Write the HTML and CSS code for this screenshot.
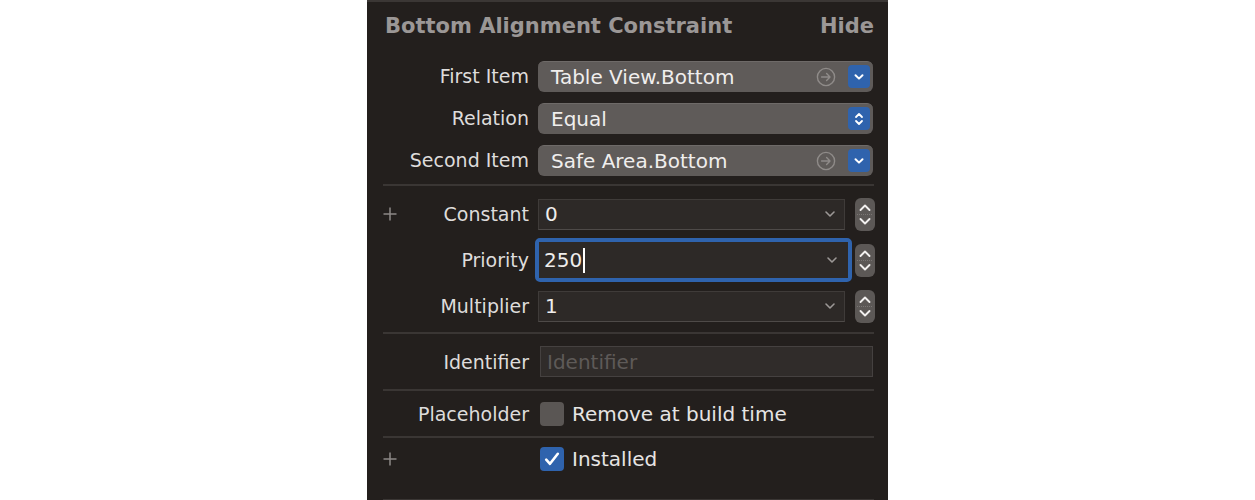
FILE: index.html
```html
<!DOCTYPE html>
<html>
<head>
<meta charset="utf-8">
<link rel="stylesheet" href="styles.css">
</head>
<body>
<div class="panel">
  <div class="header">
    <span class="title">Bottom Alignment Constraint</span>
    <span class="hide">Hide</span>
  </div>

  <div class="row r42">
    <span class="label">First Item</span>
    <div class="popup">
      <span class="ptext">Table View.Bottom</span>
      <svg class="goto" width="20" height="20" viewBox="0 0 20 20"><circle cx="10" cy="10" r="8.6" fill="none" stroke="#8f8b89" stroke-width="1.4"/><path d="M5.6 10h8.2M10.6 6.6l3.4 3.4-3.4 3.4" fill="none" stroke="#8f8b89" stroke-width="1.4" stroke-linecap="round" stroke-linejoin="round"/></svg>
      <span class="bluebtn"><svg width="12" height="8" viewBox="0 0 12 8"><path d="M2.5 2.2l3.5 3.4 3.5-3.4" fill="none" stroke="#fff" stroke-width="2" stroke-linecap="round" stroke-linejoin="round"/></svg></span>
    </div>
  </div>

  <div class="row r42">
    <span class="label">Relation</span>
    <div class="popup">
      <span class="ptext">Equal</span>
      <span class="bluebtn"><svg width="12" height="16" viewBox="0 0 12 16"><path d="M3 6l3-3 3 3M3 10l3 3 3-3" fill="none" stroke="#fff" stroke-width="1.8" stroke-linecap="round" stroke-linejoin="round"/></svg></span>
    </div>
  </div>

  <div class="row r42">
    <span class="label">Second Item</span>
    <div class="popup">
      <span class="ptext">Safe Area.Bottom</span>
      <svg class="goto" width="20" height="20" viewBox="0 0 20 20"><circle cx="10" cy="10" r="8.6" fill="none" stroke="#8f8b89" stroke-width="1.4"/><path d="M5.6 10h8.2M10.6 6.6l3.4 3.4-3.4 3.4" fill="none" stroke="#8f8b89" stroke-width="1.4" stroke-linecap="round" stroke-linejoin="round"/></svg>
      <span class="bluebtn"><svg width="12" height="8" viewBox="0 0 12 8"><path d="M2.5 2.2l3.5 3.4 3.5-3.4" fill="none" stroke="#fff" stroke-width="2" stroke-linecap="round" stroke-linejoin="round"/></svg></span>
    </div>
  </div>

  <div class="sep s1"></div>

  <div class="section2">
    <div class="row r46">
      <span class="label"><svg class="plus" width="14" height="14" viewBox="0 0 14 14"><path d="M7 0.5v13M0.5 7h13" stroke="#8d8987" stroke-width="1.5"/></svg>Constant</span>
      <div class="combo-wrap">
        <div class="combo"><span class="ctext">0</span><svg class="chev" width="12" height="8" viewBox="0 0 12 8"><path d="M2 2l4 4 4-4" fill="none" stroke="#9c9896" stroke-width="1.6" stroke-linecap="round" stroke-linejoin="round"/></svg></div>
        <span class="stepper"><svg width="20" height="33" viewBox="0 0 20 33"><path d="M5.5 12l4.5-4.5 4.5 4.5M5.5 21l4.5 4.5 4.5-4.5" fill="none" stroke="#f2f0ef" stroke-width="1.9" stroke-linecap="round" stroke-linejoin="round"/><path d="M2 16.5h16" stroke="#7a7674" stroke-width="1" stroke-dasharray="1 1"/></svg></span>
      </div>
    </div>
    <div class="row r46">
      <span class="label">Priority</span>
      <div class="combo-wrap">
        <div class="focus"><div class="combo"><span class="ctext">250<span class="caret"></span></span><svg class="chev" width="12" height="8" viewBox="0 0 12 8"><path d="M2 2l4 4 4-4" fill="none" stroke="#9c9896" stroke-width="1.6" stroke-linecap="round" stroke-linejoin="round"/></svg></div></div>
        <span class="stepper"><svg width="20" height="33" viewBox="0 0 20 33"><path d="M5.5 12l4.5-4.5 4.5 4.5M5.5 21l4.5 4.5 4.5-4.5" fill="none" stroke="#f2f0ef" stroke-width="1.9" stroke-linecap="round" stroke-linejoin="round"/><path d="M2 16.5h16" stroke="#7a7674" stroke-width="1" stroke-dasharray="1 1"/></svg></span>
      </div>
    </div>
    <div class="row r46">
      <span class="label">Multiplier</span>
      <div class="combo-wrap">
        <div class="combo"><span class="ctext">1</span><svg class="chev" width="12" height="8" viewBox="0 0 12 8"><path d="M2 2l4 4 4-4" fill="none" stroke="#9c9896" stroke-width="1.6" stroke-linecap="round" stroke-linejoin="round"/></svg></div>
        <span class="stepper"><svg width="20" height="33" viewBox="0 0 20 33"><path d="M5.5 12l4.5-4.5 4.5 4.5M5.5 21l4.5 4.5 4.5-4.5" fill="none" stroke="#f2f0ef" stroke-width="1.9" stroke-linecap="round" stroke-linejoin="round"/><path d="M2 16.5h16" stroke="#7a7674" stroke-width="1" stroke-dasharray="1 1"/></svg></span>
      </div>
    </div>
  </div>

  <div class="sep s2"></div>

  <div class="row r-id">
    <span class="label">Identifier</span>
    <div class="idfield">Identifier</div>
  </div>

  <div class="sep"></div>

  <div class="row r-ph">
    <span class="label">Placeholder</span>
    <div class="check-line"><span class="cb"></span><span class="cbtext">Remove at build time</span></div>
  </div>

  <div class="sep"></div>

  <div class="row r-inst">
    <span class="label"><svg class="plus" width="14" height="14" viewBox="0 0 14 14"><path d="M7 0.5v13M0.5 7h13" stroke="#8d8987" stroke-width="1.5"/></svg></span>
    <div class="check-line"><span class="cb on"><svg width="24" height="24" viewBox="0 0 24 24"><path d="M6.2 12.6l3.8 4.2 7.8-10" fill="none" stroke="#fff" stroke-width="2.6" stroke-linecap="round" stroke-linejoin="round"/></svg></span><span class="cbtext">Installed</span></div>
  </div>

  <div class="sep last"></div>
</div>
</body>
</html>
```

FILE: styles.css
```css
html, body {
  margin: 0;
  padding: 0;
  background: #ffffff;
}

body {
  font-family: "DejaVu Sans", "Liberation Sans", sans-serif;
}

.panel {
  margin-left: 367px;
  width: 521px;
  height: 500px;
  box-sizing: border-box;
  background: #231f1d;
  border-top: 2px solid #3b3735;
  color: #dedcdb;
  overflow: hidden;
}

.header {
  height: 53px;
  display: flex;
  align-items: center;
  justify-content: space-between;
  padding: 0 14px 6px 18px;
  box-sizing: border-box;
  font-weight: 700;
  font-size: 21px;
  color: #9b9796;
}

.row {
  display: grid;
  grid-template-columns: 162px 1fr;
  column-gap: 9px;
  align-items: center;
  padding-right: 15px;
  box-sizing: border-box;
}

.r42 { height: 42px; }
.r46 { height: 46px; }

.label {
  position: relative;
  text-align: right;
  font-size: 19px;
  color: #dedcdb;
  min-height: 22px;
}

.plus {
  position: absolute;
  left: 16px;
  top: 50%;
  margin-top: -7px;
}

.popup {
  height: 31px;
  border-radius: 6px;
  background: #5f5b59;
  border-top: 1px solid #6e6a68;
  box-sizing: border-box;
  display: flex;
  align-items: center;
  padding: 0 3px 0 13px;
}

.ptext {
  flex: 1;
  font-size: 20px;
  color: #f0eeed;
}

.goto {
  margin-right: 12px;
}

.bluebtn {
  width: 22px;
  height: 23px;
  border-radius: 4px;
  background: #2f63ad;
  display: flex;
  align-items: center;
  justify-content: center;
}

.sep {
  height: 2px;
  background: #3a3634;
  margin: 0 14px 0 16px;
}

.s1 { margin-top: 3px; }

.section2 { padding-top: 5px; }

.s2 { margin-top: 3px; }

.combo-wrap {
  display: flex;
  align-items: center;
  gap: 10px;
  margin-right: -2px;
}

.combo {
  flex: 1;
  height: 31px;
  box-sizing: border-box;
  background: #2d2927;
  border: 1px solid #3f3b39;
  border-bottom-color: #4e4a48;
  display: flex;
  align-items: center;
  padding: 0 8px 0 6px;
}

.focus {
  flex: 1;
  margin: 0 -7px 0 -3px;
  border: 4px solid #2f63ad;
  border-radius: 5px;
  display: flex;
}

.focus .combo {
  height: 36px;
  border: none;
  padding-left: 5px;
  padding-right: 10px;
}

.ctext {
  flex: 1;
  font-size: 20px;
  color: #efedec;
  display: flex;
  align-items: center;
}

.caret {
  display: inline-block;
  width: 2px;
  height: 25px;
  background: #ffffff;
  margin-left: 1px;
}

.stepper {
  width: 20px;
  height: 33px;
  border-radius: 6px;
  background: #5c5856;
  display: flex;
}

.r-id { height: 55px; }

.idfield {
  margin-left: 2px;
  height: 31px;
  box-sizing: border-box;
  background: #302c2a;
  border: 1px solid #454140;
  font-size: 20px;
  color: #5e5a58;
  display: flex;
  align-items: center;
  padding-left: 6px;
}

.r-ph { height: 45px; }
.r-inst { height: 61px; padding-bottom: 19px; }

.check-line {
  display: flex;
  align-items: center;
  gap: 8px;
  margin-left: 2px;
}

.cb {
  width: 24px;
  height: 24px;
  border-radius: 4px;
  background: #5a5654;
  display: flex;
}

.cb.on {
  background: #2f63ad;
}

.cbtext {
  font-size: 20px;
  color: #e6e4e3;
}
```
